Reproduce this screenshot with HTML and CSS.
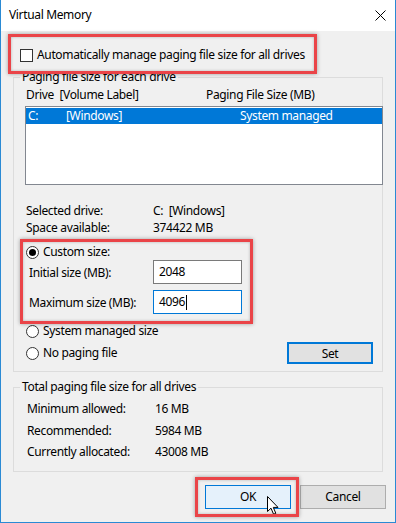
FILE: index.html
```html
<!DOCTYPE html>
<html lang="en">
<head>
    <meta charset="UTF-8">
    <title>Virtual Memory</title>
    <link rel="stylesheet" href="styles.css">
</head>
<body>
    <div class="window">
        <div class="titlebar">
            <span class="title">Virtual Memory</span>
            <svg class="close" width="11" height="11" viewBox="0 0 11 11">
                <path d="M0.5 0.5 L10.5 10.5 M10.5 0.5 L0.5 10.5" stroke="#000" stroke-width="1" fill="none"/>
            </svg>
        </div>

        <div class="content">
            <div class="auto-row highlight-auto">
                <span class="checkbox"></span>
                <span>Automatically manage paging file size for all drives</span>
            </div>

            <fieldset class="group drives">
                <legend>Paging file size for each drive</legend>
                <div class="list-head">
                    <span>Drive&nbsp; [Volume Label]</span>
                    <span>Paging File Size (MB)</span>
                </div>
                <div class="listbox">
                    <div class="list-row selected">
                        <span>C:</span>
                        <span>[Windows]</span>
                        <span>System managed</span>
                    </div>
                </div>

                <div class="info">
                    <span>Selected drive:</span><span>C:&nbsp; [Windows]</span>
                    <span>Space available:</span><span>374422 MB</span>
                </div>

                <div class="custom highlight-custom">
                    <div class="radio-row">
                        <span class="radio checked"></span>
                        <span>Custom size:</span>
                    </div>
                    <div class="size-row">
                        <span>Initial size (MB):</span>
                        <div class="textbox">2048</div>
                    </div>
                    <div class="size-row">
                        <span>Maximum size (MB):</span>
                        <div class="textbox focused">4096<span class="caret"></span></div>
                    </div>
                </div>

                <div class="options">
                    <div class="radio-row">
                        <span class="radio"></span>
                        <span>System managed size</span>
                    </div>
                    <div class="option-last">
                        <div class="radio-row">
                            <span class="radio"></span>
                            <span>No paging file</span>
                        </div>
                        <button class="btn btn-default set">Set</button>
                    </div>
                </div>
            </fieldset>

            <fieldset class="group totals">
                <legend>Total paging file size for all drives</legend>
                <div class="total-grid">
                    <span>Minimum allowed:</span><span>16 MB</span>
                    <span>Recommended:</span><span>5984 MB</span>
                    <span>Currently allocated:</span><span>43008 MB</span>
                </div>
            </fieldset>

            <div class="buttons">
                <div class="ok-wrap highlight-ok">
                    <button class="btn btn-hover">OK</button>
                    <svg class="cursor" width="13" height="20" viewBox="0 0 13 20">
                        <path d="M0.5 0.5 L0.5 15.5 L4 12.2 L6.6 18.3 L8.8 17.3 L6.3 11.4 L11 11.4 Z" fill="#fff" stroke="#000" stroke-width="1" stroke-linejoin="miter"/>
                    </svg>
                </div>
                <button class="btn">Cancel</button>
            </div>
        </div>
    </div>
</body>
</html>
```

FILE: styles.css
```css
body {
    margin: 0;
    font-family: "Noto Sans", "Open Sans", sans-serif;
    font-size: 12px;
    letter-spacing: -0.35px;
    color: #000;
}
.window {
    width: 396px;
    height: 523px;
    box-sizing: border-box;
    border: 1px solid #2a8ad4;
    border-top: none;
    background-color: #f0f0f0;
    display: flex;
    flex-direction: column;
}
.titlebar {
    height: 31px;
    background-color: #fff;
    display: flex;
    align-items: center;
    justify-content: space-between;
    padding: 0 9px 0 8px;
    flex-shrink: 0;
}
.title {
    font-size: 12px;
    line-height: 16px;
    margin-top: -1px;
}
.close {
    display: block;
}
.content {
    flex: 1;
}

/* highlight boxes drawn over the dialog */
.highlight-auto,
.highlight-custom,
.highlight-ok {
    position: relative;
}
.highlight-auto::after,
.highlight-custom::after,
.highlight-ok::after {
    content: "";
    position: absolute;
    box-sizing: border-box;
    border: 3px solid #ea4448;
    box-shadow: 0 0 4px rgba(0,0,0,0.35), inset 0 0 3px rgba(0,0,0,0.25);
    pointer-events: none;
}
.highlight-auto::after {
    left: 7px;
    top: -13px;
    width: 309px;
    height: 40px;
}
.highlight-custom::after {
    left: -5px;
    top: -5px;
    width: 233px;
    height: 85px;
}
.highlight-ok::after {
    left: -10px;
    top: -8px;
    width: 104px;
    height: 40px;
}

.auto-row {
    margin-top: 16px;
    padding-left: 19px;
    display: flex;
    align-items: center;
    gap: 4px;
    line-height: 16px;
    height: 16px;
}
.checkbox {
    width: 13px;
    height: 13px;
    box-sizing: border-box;
    border: 1px solid #333;
    background-color: #fff;
}

.group {
    margin: 0 0 0 12px;
    width: 370px;
    box-sizing: border-box;
    border: 1px solid #dcdcdc;
    min-width: 0;
}
.group legend {
    line-height: 16px;
    padding: 0 2px;
}
.drives {
    margin-top: 6px;
    padding: 2px 0 7px 11px;
}
.drives legend {
    margin-left: -5px;
}
.list-head {
    display: grid;
    grid-template-columns: 180px 1fr;
    padding-left: 1px;
    line-height: 16px;
}
.listbox {
    margin-top: 3px;
    width: 358px;
    height: 79px;
    box-sizing: border-box;
    border: 1px solid #828790;
    background-color: #fff;
    padding: 1px 0 0 0;
}
.list-row {
    display: grid;
    grid-template-columns: 38px 174px 1fr;
    line-height: 16px;
    padding-left: 2px;
}
.list-row.selected {
    background-color: #0078d7;
    color: #fff;
}

.info {
    margin-top: 17px;
    display: grid;
    grid-template-columns: 127px 1fr;
    padding-left: 1px;
    line-height: 17px;
}

.radio-row {
    display: flex;
    align-items: center;
    gap: 4px;
    line-height: 16px;
}
.radio {
    width: 13px;
    height: 13px;
    box-sizing: border-box;
    border: 1px solid #333;
    border-radius: 50%;
    background-color: #fff;
    display: flex;
    align-items: center;
    justify-content: center;
}
.radio.checked::before {
    content: "";
    width: 7px;
    height: 7px;
    border-radius: 50%;
    background-color: #000;
}

.custom {
    margin-top: 8px;
    width: 224px;
}
.custom .radio-row {
    padding-left: 1px;
}
.size-row {
    display: grid;
    grid-template-columns: 124px 89px;
    align-items: center;
    padding-left: 4px;
}
.size-row + .size-row {
    margin-top: 6px;
}
.textbox {
    height: 24px;
    box-sizing: border-box;
    border: 1px solid #7a7a7a;
    background-color: #fff;
    padding-left: 5px;
    line-height: 22px;
    display: flex;
    align-items: center;
}
.textbox.focused {
    border-color: #0078d7;
}
.caret {
    width: 1px;
    height: 15px;
    background-color: #000;
    margin-left: 1px;
}

.options {
    margin-top: 9px;
    padding-left: 1px;
}
.option-last {
    margin-top: 3px;
    display: flex;
    align-items: center;
    justify-content: space-between;
    padding-right: 9px;
}

.btn {
    font-family: inherit;
    font-size: 12px;
    letter-spacing: inherit;
    color: #000;
    width: 86px;
    height: 24px;
    box-sizing: border-box;
    border: 1px solid #adadad;
    background-color: #e1e1e1;
    padding: 0;
}
.set {
    height: 22px;
}
.btn-default {
    border: 2px solid #0078d7;
}
.btn-hover {
    background-color: #e5f1fb;
    border-color: #0078d7;
}

.totals {
    margin-top: 7px;
    padding: 3px 0 8px 13px;
}
.totals legend {
    margin-left: -7px;
}
.total-grid {
    display: grid;
    grid-template-columns: 128px 1fr;
    line-height: 21.5px;
}

.buttons {
    margin-top: 13px;
    display: flex;
    justify-content: flex-end;
    gap: 9px;
    padding-right: 9px;
}
.ok-wrap {
    display: flex;
}
.cursor {
    position: absolute;
    left: 62px;
    top: 11px;
}
```
